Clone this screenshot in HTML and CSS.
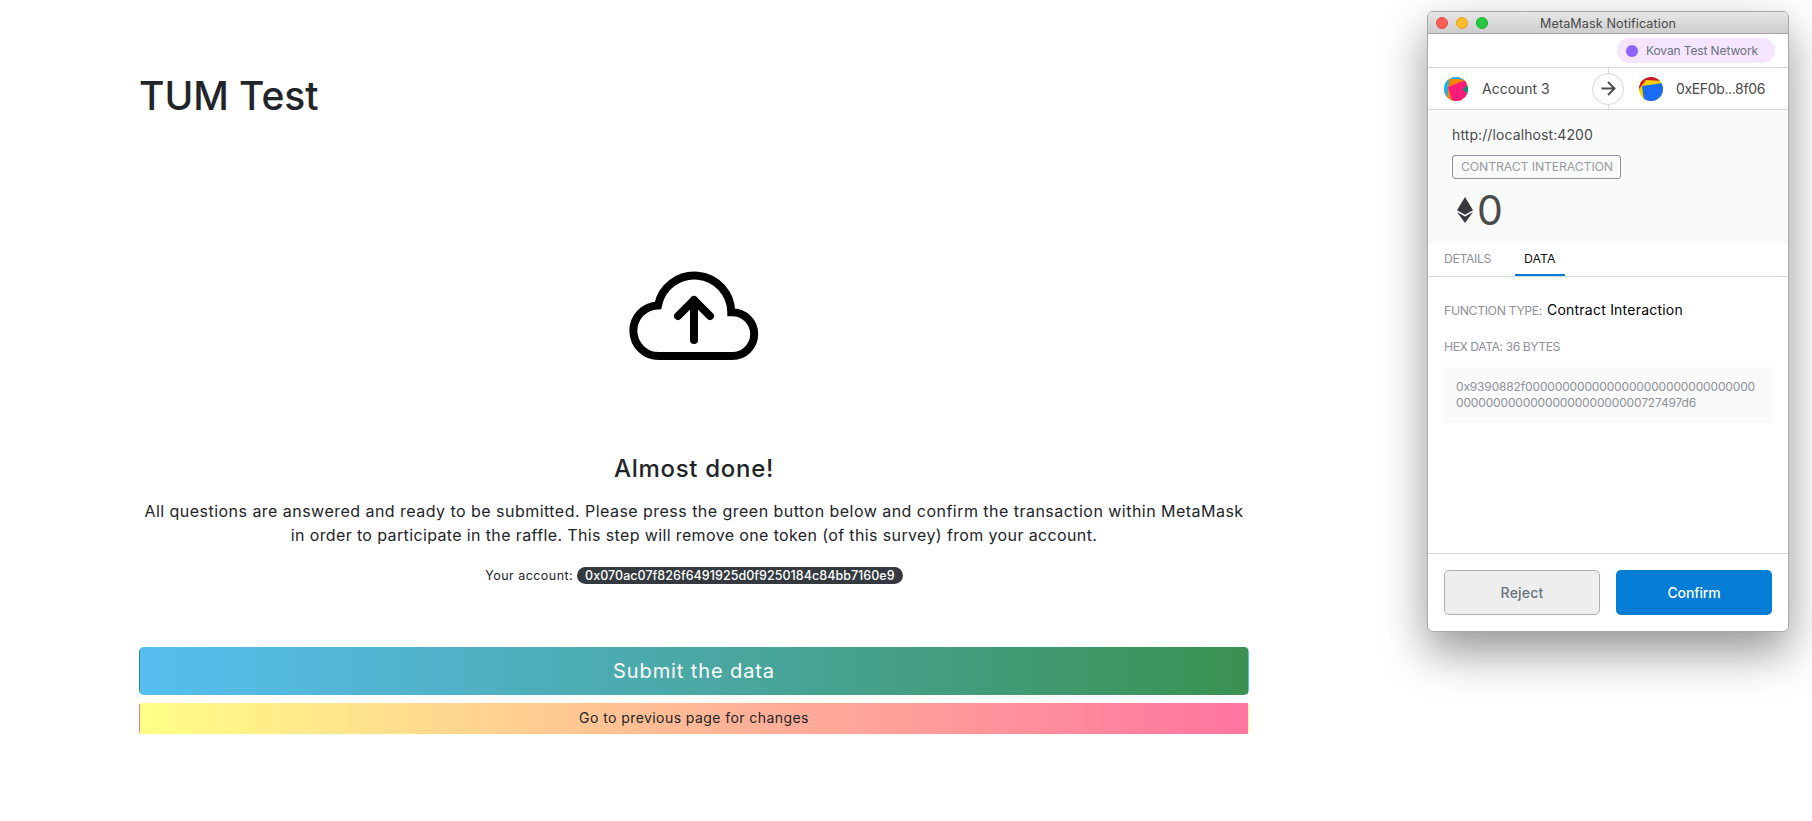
FILE: index.html
```html
<!DOCTYPE html>
<html lang="en"><head><meta charset="utf-8"><title>TUM Test</title><link rel="stylesheet" href="styles.css"></head>
<body>
<main class="page">
  <h1 class="title">TUM Test</h1>
  <svg class="cloud" viewBox="0 0 190 130" fill="none" stroke="#000" stroke-width="8">
    <path d="M59.3 106A25.3 25.3 0 0 1 58 55.4A37 37 0 0 1 131.3 62.2H132.3A21.9 21.9 0 0 1 132.3 106Z"/>
    <path d="M94 90V50M78 66L94 50L110 66" stroke-linecap="round" stroke-linejoin="round"/>
  </svg>
  <h2 class="heading">Almost done!</h2>
  <p class="lead">All questions are answered and ready to be submitted. Please press the green button below and confirm the transaction within MetaMask<br><span class="second-line">in order to participate in the raffle. This step will remove one token (of this survey) from your account.</span></p>
  <div class="account"><span class="account-label">Your account:</span><span class="badge">0x070ac07f826f6491925d0f9250184c84bb7160e9</span></div>
  <button class="btn submit">Submit the data</button>
  <button class="btn previous">Go to previous page for changes</button>
</main>
<aside class="window">
  <header class="titlebar"><i class="dot red"></i><i class="dot yellow"></i><i class="dot green"></i><span class="window-title">MetaMask Notification</span></header>
  <div class="network"><div class="pill"><i></i><span>Kovan Test Network</span></div></div>
  <div class="accounts">
    <svg class="avatar" viewBox="0 0 24 24"><clipPath id="c1"><circle cx="12" cy="12" r="12"/></clipPath><g clip-path="url(#c1)"><path fill="#f58300" d="M0 0h24v24H0z"/><path fill="#18b3f2" d="M0 0h6L4 10 3 24H0zM5 0h19v5L16 2 6 2z"/><path fill="#fa1c78" d="M4 10L22 3L24 24H8z"/><path fill="#018e7c" d="M24 8L18.5 12.5L24 17z"/></g></svg>
    <span class="from">Account 3</span>
    <svg class="arrow" viewBox="0 0 34 41" fill="none"><path d="M17.5 0v41" stroke="#d2d8dd"/><circle cx="17" cy="21" r="15.5" fill="#fff" stroke="#d2d8dd"/><path d="M10.5 20.5H23M17 14L23.5 20.5L17 27" stroke="#4a4a4a" stroke-width="1.9"/></svg>
    <svg class="avatar second" viewBox="0 0 24 24"><clipPath id="c2"><circle cx="12" cy="12" r="12"/></clipPath><g clip-path="url(#c2)"><path fill="#f7d000" d="M0 0h24v24H0z"/><path fill="#c8142c" d="M0 0h24v4L7 3L0 12z"/><path fill="#f3182c" d="M0 12L6 3L2 3z"/><path fill="#1a6cf2" d="M3 9L24 6V24H5z"/></g></svg>
    <span class="to">0xEF0b...8f06</span>
  </div>
  <section class="summary">
    <div class="origin">http://localhost:4200</div>
    <div class="chip">CONTRACT INTERACTION</div>
    <div class="amount"><svg viewBox="0 0 16 26" fill="#393a3d"><path d="M8 0L16 13.2L8 17.8L0 13.2z"/><path d="M0 15L8 19.6L16 15L8 26z"/></svg><span>0</span></div>
  </section>
  <nav class="tabs"><a class="tab details">DETAILS</a><a class="tab active">DATA</a></nav>
  <section class="data">
    <div class="row"><span class="key">FUNCTION TYPE:</span><span class="val">Contract Interaction</span></div>
    <div class="key hexkey">HEX DATA: 36 BYTES</div>
    <div class="hex">0x9390882f0000000000000000000000000000000<br>0000000000000000000000000727497d6</div>
  </section>
  <footer class="actions"><button class="reject">Reject</button><button class="confirm">Confirm</button></footer>
</aside>
</body></html>
```
FILE: styles.css
```css
* { box-sizing: border-box; }
body { margin: 0; width: 1812px; height: 821px; overflow: hidden; background: #fff; color: #212529; font-family: Inter, "Liberation Sans", sans-serif; display: flex; align-items: flex-start; white-space: nowrap; }
h1, h2, p { margin: 0; font-weight: 500; }
button { font-family: inherit; padding: 0; display: block; }
.page { width: 1110px; margin-left: 139px; padding-top: 72px; display: flex; flex-direction: column; }
.title { font-size: 39px; line-height: 48px; letter-spacing: -0.05px; }
.cloud { width: 190px; height: 130px; margin: 130px 0 0 461px; }
.heading { margin-top: 74px; font-size: 24px; line-height: 29px; letter-spacing: 0.7px; text-align: center; }
.lead { margin-top: 16px; font-size: 16px; line-height: 24px; font-weight: 400; letter-spacing: 0.468px; text-align: center; }
.second-line { letter-spacing: 0.37px; }
.account { margin-top: 20px; height: 17px; display: flex; justify-content: center; gap: 4px; font-size: 12.5px; line-height: 17px; }
.account-label { letter-spacing: 0.45px; }
.badge { background: #343a40; color: #fff; border-radius: 9px; padding: 0 8px; font-weight: 500; letter-spacing: 0.04px; }
.btn { width: 1110px; border: 1px solid transparent; }
.submit { margin-top: 63px; height: 48px; border-radius: 5px; font-size: 20px; letter-spacing: 0.9px; color: #fff; background-image: linear-gradient(to right, #56bef0, #4aa8a5 50%, #3a9150); }
.previous { margin-top: 8px; height: 31px; padding-bottom: 2px; border-radius: 3px; font-size: 14px; letter-spacing: 0.43px; color: #212529; background-image: linear-gradient(to right, #ffff85, #ffb896 50%, #ff74a0); }
.window { width: 362px; height: 621px; margin: 11px 23px 0 auto; border: 1px solid #a8a8a8; border-radius: 6px; overflow: hidden; background: #fff; box-shadow: 0 20px 46px rgba(0,0,0,.42); display: flex; flex-direction: column; color: #4a4a4a; }
.titlebar { height: 22px; flex: none; display: flex; align-items: center; gap: 8px; padding-left: 8px; background: linear-gradient(#e6e6e6, #cecece); border-bottom: 1px solid #a6a6a6; }
.dot { width: 12px; height: 12px; border-radius: 50%; }
.red { background: #ff5f57; border: 1px solid #e2463f; }
.yellow { background: #ffbd2e; border: 1px solid #e1a116; }
.green { background: #28c940; border: 1px solid #12ac28; }
.window-title { margin-left: 44px; padding-top: 1px; font-size: 12.6px; letter-spacing: 0.1px; }
.network { height: 34px; flex: none; border-bottom: 1px solid #d2d8dd; padding: 4px 13px 0 0; display: flex; justify-content: flex-end; }
.pill { width: 158px; height: 25px; border-radius: 13px; background: #f5e5ff; padding-left: 9px; display: flex; align-items: center; gap: 8px; font-size: 12px; letter-spacing: -0.117px; color: #6a737d; }
.pill i { width: 12px; height: 12px; border-radius: 50%; background: #9064ff; }
.accounts { height: 42px; flex: none; border-bottom: 1px solid #d2d8dd; display: flex; align-items: center; padding-left: 16px; font-size: 14px; }
.avatar { width: 24px; height: 24px; }
.from { margin-left: 14px; width: 109px; position: relative; }
.arrow { width: 34px; height: 41px; }
.second { margin-left: 14px; }
.to { margin-left: 13px; letter-spacing: -0.362px; }
.summary { height: 133px; flex: none; background: #f9fafa; padding: 16px 24px 0; }
.origin { font-size: 14px; line-height: 18px; letter-spacing: 0.1px; }
.chip { margin-top: 11px; width: 169px; height: 24px; border: 1px solid #8f9198; border-radius: 3px; padding-left: 8px; font-size: 12.3px; line-height: 22px; letter-spacing: -0.136px; color: #9b9ca3; }
.amount { margin-top: 7px; height: 48px; display: flex; align-items: center; font-size: 41px; line-height: 48px; }
.amount svg { width: 16px; height: 26px; margin: 0 5px; }
.amount span { margin-left: -1px; }
.tabs { height: 34px; flex: none; border-bottom: 1px solid #d2d8dd; display: flex; padding-left: 6px; }
.tab { height: 33px; padding: 0 10px; font-size: 12.3px; line-height: 32px; color: #8f9198; }
.details { width: 67px; letter-spacing: -0.4px; }
.active { margin-left: 14px; width: 50px; padding: 0 9px; letter-spacing: 0.1px; color: #111; border-bottom: 2px solid #037dd6; }
.data { flex: 1; padding: 23px 16px; }
.row { display: flex; align-items: baseline; height: 20px; line-height: 20px; }
.key { font-size: 12.3px; letter-spacing: -0.382px; color: #8f9198; line-height: 20px; }
.val { margin-left: 5px; font-size: 14px; letter-spacing: 0.223px; color: #000; }
.hexkey { margin-top: 17px; letter-spacing: -0.51px; }
.hex { margin-top: 10px; height: 56px; background: #f9fafa; padding: 12px; font-size: 12px; line-height: 16px; letter-spacing: -0.154px; color: #8f9198; }
.actions { height: 78px; flex: none; border-top: 1px solid #d2d8dd; display: flex; gap: 16px; padding: 16px; }
.actions button { width: 156px; height: 45px; border-radius: 5px; font-size: 14px; font-weight: 500; }
.reject { background: #eee; border: 1px solid #aeb0b2; color: #6a737d; letter-spacing: 0.2px; }
.actions .confirm { background: #037dd6; border: 0; color: #fff; letter-spacing: -0.15px; }
```
